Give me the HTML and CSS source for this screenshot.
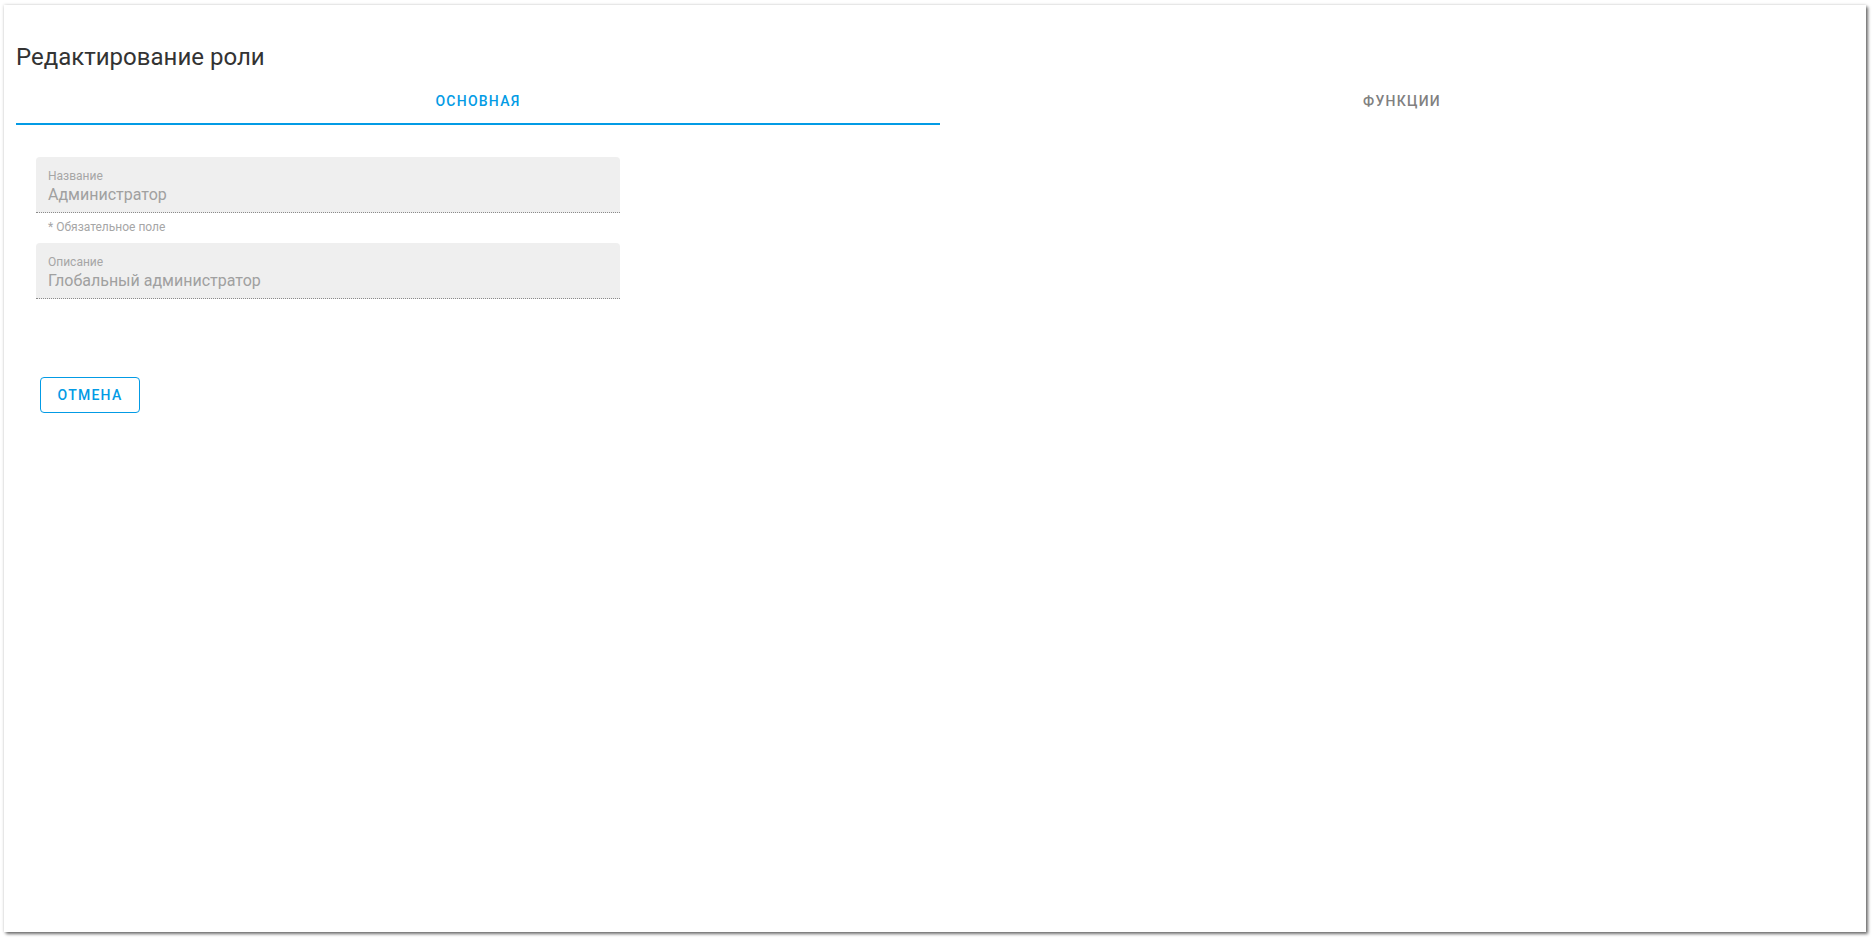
FILE: index.html
```html
<!DOCTYPE html>
<html lang="ru">
<head>
<meta charset="utf-8">
<title>Редактирование роли</title>
<link rel="stylesheet" href="styles.css">
</head>
<body>
<div class="page">
  <div class="panel">
    <h1 class="title">Редактирование роли</h1>
    <div class="tabs">
      <div class="tab tab-active">Основная</div>
      <div class="tab">Функции</div>
    </div>
    <div class="tab-body">
      <div class="field">
        <div class="field-label">Название</div>
        <div class="field-value">Администратор</div>
      </div>
      <div class="hint">* Обязательное поле</div>
      <div class="field">
        <div class="field-label">Описание</div>
        <div class="field-value">Глобальный администратор</div>
      </div>
      <div class="actions">
        <button class="btn-outline" type="button">Отмена</button>
      </div>
    </div>
  </div>
</div>
</body>
</html>
```

FILE: styles.css
```css
html, body {
  margin: 0;
  padding: 0;
  background: #ffffff;
}

body {
  font-family: Roboto, "Liberation Sans", sans-serif;
  color: #333333;
}

.page {
  padding: 5px 0 0 4px;
  box-sizing: border-box;
  height: 941px;
  overflow: hidden;
}

.panel {
  width: 1862px;
  height: 927px;
  background: #ffffff;
  box-sizing: border-box;
  padding: 0 2px 0 12px;
  box-shadow: 2px 2px 3px rgba(0, 0, 0, 0.55), 0 0 3px rgba(0, 0, 0, 0.18);
}

.title {
  margin: 0;
  padding-top: 36px;
  font-size: 24px;
  line-height: 32px;
  font-weight: 400;
  color: #333333;
}

.tabs {
  display: flex;
  margin-top: 4px;
}

.tab {
  flex: 1 1 0;
  height: 48px;
  box-sizing: border-box;
  padding-top: 2px;
  display: flex;
  align-items: center;
  justify-content: center;
  font-size: 14px;
  font-weight: 500;
  letter-spacing: 1.25px;
  text-transform: uppercase;
  color: #808080;
  border-bottom: 2px solid transparent;
}

.tab-active {
  color: #039be5;
  border-bottom-color: #039be5;
}

.tab-body {
  padding: 32px 20px 0 20px;
}

.field {
  width: 584px;
  height: 56px;
  box-sizing: border-box;
  background: #efefef;
  border-radius: 4px 4px 0 0;
  padding: 12px 12px 0 12px;
  border-bottom: 1px dotted #8a8a8a;
}

.field-label {
  font-size: 12px;
  line-height: 14px;
  color: #a6a6a6;
}

.field-value {
  font-size: 16px;
  line-height: 20px;
  margin-top: 2px;
  color: #a0a0a0;
}

.hint {
  font-size: 12px;
  line-height: 14px;
  color: #a6a6a6;
  padding: 7px 12px 0 12px;
  height: 30px;
  box-sizing: border-box;
}

.actions {
  padding-top: 78px;
  padding-left: 4px;
}

.btn-outline {
  width: 100px;
  height: 36px;
  background: #ffffff;
  border: 1px solid #039be5;
  border-radius: 4px;
  color: #039be5;
  font-family: Roboto, "Liberation Sans", sans-serif;
  font-size: 14px;
  font-weight: 500;
  letter-spacing: 1.25px;
  text-transform: uppercase;
  padding: 0;
  cursor: pointer;
}
```
